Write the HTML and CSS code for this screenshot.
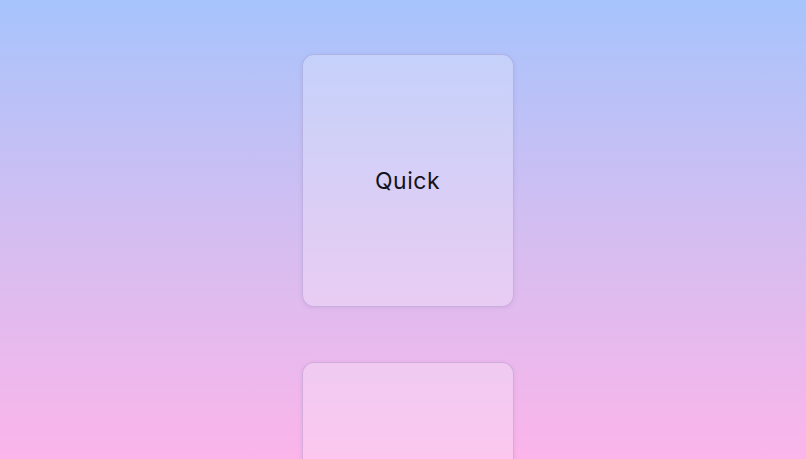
FILE: index.html
```html
<!DOCTYPE html>
<html lang="en">
  <head>
    <meta charset="UTF-8" />
    <meta name="viewport" content="width=device-width, initial-scale=1.0" />
    <title>Cards</title>
    <link rel="stylesheet" href="styles.css">
  </head>
  <body>
    <main class="stack">
      <div class="card">
        <span class="label">Quick</span>
      </div>
      <div class="card"></div>
    </main>
  </body>
</html>
```

FILE: styles.css
```css
* {
  padding: 0;
  margin: 0;
  box-sizing: border-box;
}

html {
  background: linear-gradient(180deg, #a7c4fc 0%, #d8bdf0 55%, #fbb5ea 100%) fixed;
  min-height: 100%;
}

body {
  font-family: Inter, "Noto Sans", sans-serif;
  color: #14121c;
}

.stack {
  display: flex;
  flex-direction: column;
  align-items: center;
  gap: 55px;
  padding: 54px 0 60px 9px;
}

.card {
  width: 212px;
  height: 253px;
  display: flex;
  align-items: center;
  justify-content: center;
  border-radius: 12px;
  border: 1px solid rgba(120, 100, 170, 0.28);
  background: rgba(255, 255, 255, 0.25);
  box-shadow: 0 1px 4px rgba(90, 60, 140, 0.1);
}

.label {
  font-size: 23px;
  letter-spacing: 0.5px;
}
```
